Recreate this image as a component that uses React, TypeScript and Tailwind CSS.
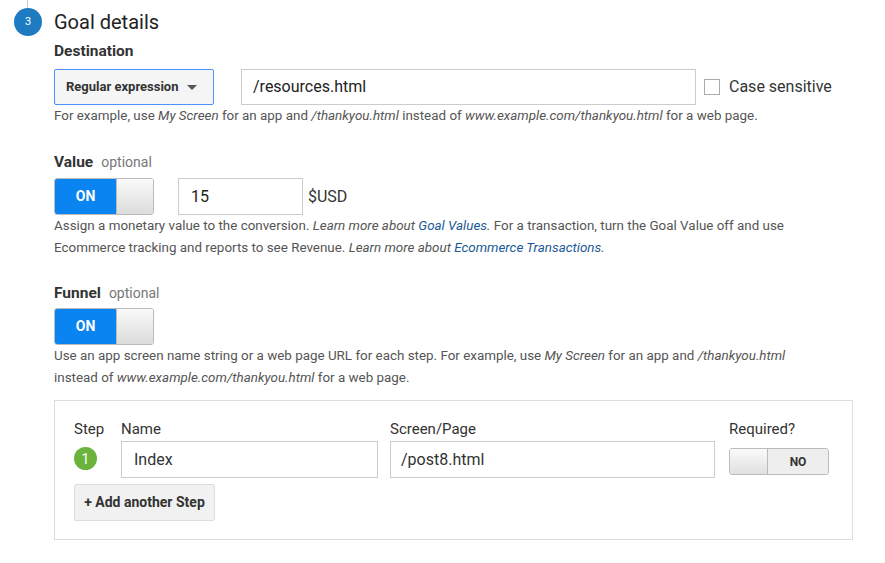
export default function App() {
  const link = "text-[#1a5a96]";
  return (
    <div className="w-[885px] h-[563px] bg-white relative overflow-hidden text-[#333]" style={{ fontFamily: "Roboto, 'Liberation Sans', sans-serif" }}>
      <div className="absolute left-[27px] top-0 w-px h-[8px] bg-[#ccc]" />
      <div className="flex pt-[8px] pl-[14px]">
        <div className="w-[28px] h-[28px] rounded-full bg-[#1f7bc1] text-white text-[11px] flex items-center justify-center shrink-0">3</div>
        <div className="ml-[12px] flex flex-col">
          <div className="text-[20px] leading-[28px] text-[#222]">Goal details</div>
          <div className="text-[15.5px] font-bold mt-[5px] leading-[20px]">Destination</div>
          <div className="flex items-center mt-[8px]">
            <div className="w-[160px] h-[36px] border border-[#4d90fe] bg-[#f5f5f5] rounded-[2px] flex items-center pl-[11px] text-[13px] font-bold text-[#333]">
              Regular expression
              <span className="ml-[9px] w-0 h-0 border-l-[5px] border-r-[5px] border-t-[5px] border-l-transparent border-r-transparent border-t-[#555]" />
            </div>
            <div className="ml-[27px] w-[455px] h-[36px] border border-[#ccc] flex items-center pl-[11px] text-[16px] text-[#222]">/resources.html</div>
            <div className="ml-[8px] w-[16px] h-[16px] border border-[#aaa] bg-white" />
            <div className="ml-[9px] text-[16px] text-[#333]">Case sensitive</div>
          </div>
          <div className="text-[13.4px] text-[#555] mt-[2px] leading-[18px]">
            For example, use <i>My Screen</i> for an app and <i>/thankyou.html</i> instead of <i>www.example.com/thankyou.html</i> for a web page.
          </div>
          <div className="mt-[27px] flex items-baseline leading-[20px]">
            <span className="text-[15.5px] font-bold">Value</span>
            <span className="ml-[8px] text-[14px] text-[#777]">optional</span>
          </div>
          <Toggle className="mt-[6px]" />
          <div className="text-[13.4px] text-[#555] mt-[0px] leading-[22px]">
            Assign a monetary value to the conversion. <i>Learn more about <span className={link}>Goal Values</span>.</i> For a transaction, turn the Goal Value off and use<br />
            Ecommerce tracking and reports to see Revenue. <i>Learn more about <span className={link}>Ecommerce Transactions</span>.</i>
          </div>
          <div className="mt-[24px] flex items-baseline leading-[20px]">
            <span className="text-[15.5px] font-bold">Funnel</span>
            <span className="ml-[8px] text-[14px] text-[#777]">optional</span>
          </div>
          <div className="mt-[5px] flex"><ToggleOnly /></div>
          <div className="text-[13.4px] text-[#555] mt-[0px] leading-[22px]">
            Use an app screen name string or a web page URL for each step. For example, use <i>My Screen</i> for an app and <i>/thankyou.html</i><br />
            instead of <i>www.example.com/thankyou.html</i> for a web page.
          </div>
          <div className="mt-[11px] w-[799px] h-[140px] border border-[#ddd] pl-[19px] pt-[19px]">
            <div className="flex text-[15px] text-[#333] leading-[18px]">
              <div className="w-[47px] flex flex-col">
                <span>Step</span>
                <div className="mt-[9px] ml-0 w-[23px] h-[23px] rounded-full bg-[#6cb33e] text-white text-[14px] flex items-center justify-center">1</div>
              </div>
              <div className="flex flex-col">
                <span>Name</span>
                <div className="mt-[3px] w-[257px] h-[37px] border border-[#ccc] flex items-center pl-[12px] text-[16px]">Index</div>
              </div>
              <div className="flex flex-col ml-[12px]">
                <span>Screen/Page</span>
                <div className="mt-[3px] w-[325px] h-[37px] border border-[#ccc] flex items-center pl-[10px] text-[16px]">/post8.html</div>
              </div>
              <div className="flex flex-col ml-[14px]">
                <span>Required?</span>
                <div className="mt-[10px] w-[100px] h-[27px] border border-[#bbb] rounded-[3px] flex overflow-hidden">
                  <div className="w-[38px] bg-gradient-to-b from-[#fafafa] to-[#e0e0e0] border-r border-[#bbb]" />
                  <div className="flex-1 bg-[#eee] flex items-center justify-center text-[12px] font-bold">NO</div>
                </div>
              </div>
            </div>
            <div className="mt-[6px] w-[141px] h-[37px] bg-[#f1f1f1] border border-[#ddd] rounded-[2px] flex items-center justify-center text-[14px] font-bold text-[#333]">+ Add another Step</div>
          </div>
        </div>
      </div>
    </div>
  );
}

function ToggleOnly() {
  return (
    <div className="w-[100px] h-[37px] rounded-[3px] border border-[#bbb] flex overflow-hidden">
      <div className="w-[61px] bg-[#0a84f0] text-white text-[14px] font-bold flex items-center justify-center">ON</div>
      <div className="flex-1 bg-gradient-to-b from-[#fafafa] to-[#dcdcdc] border-l border-[#bbb]" />
    </div>
  );
}

function Toggle({ className }: { className?: string }) {
  return (
    <div className={"flex items-center " + (className || "")}>
      <ToggleOnly />
      <div className="ml-[24px] w-[125px] h-[37px] border border-[#ccc] flex items-center pl-[12px] text-[16px] text-[#222]">15</div>
      <div className="ml-[5px] text-[16px] text-[#333]">$USD</div>
    </div>
  );
}
